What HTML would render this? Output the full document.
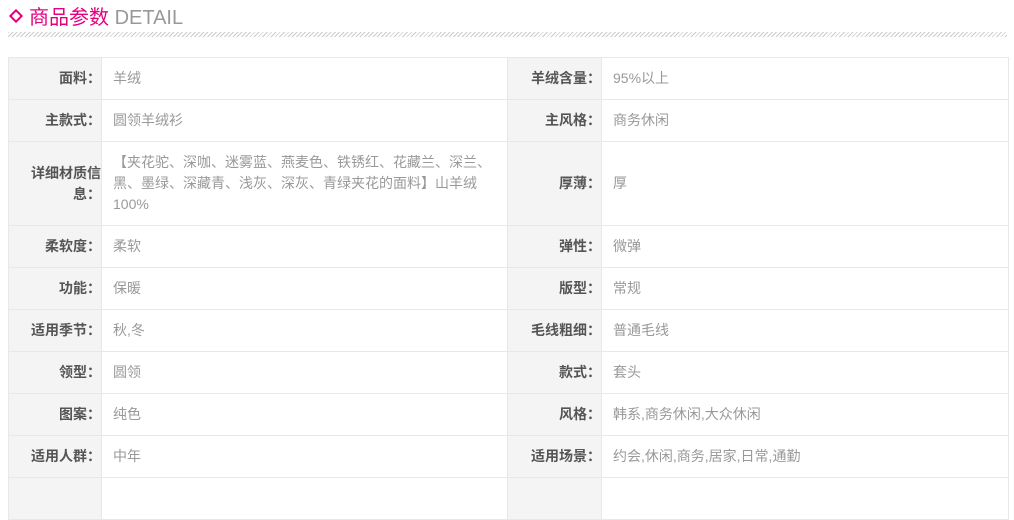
<!DOCTYPE html>
<html><head><meta charset="utf-8"><style>
body{margin:0;background:#fff;font-family:"Liberation Sans","Noto Sans CJK SC",sans-serif;width:1014px;height:482px;overflow:hidden;position:relative}
.title{position:absolute;left:8px;top:4px;height:28px;font-size:20px;line-height:28px}
.dia{display:inline-block;width:6px;height:6px;border:2px solid #e4007f;transform:rotate(45deg);margin:0 8px 0 3px;position:relative;top:-3px}
.cn{color:#e4007f}.en{color:#999}
.hatch{position:absolute;left:8px;top:32px;width:999px;height:5px;background:repeating-linear-gradient(135deg,#ccc 0 1px,#fff 1px 3px)}
table{position:absolute;left:8px;top:57px;border-collapse:collapse;width:1000px;table-layout:fixed;font-size:14px}
td{border:1px solid #e8e8e8;height:41px;padding:0;line-height:21px;vertical-align:middle}
td.l{background:#f4f4f4;color:#555;font-weight:bold;text-align:right;padding-right:0}
td.v{color:#999;padding-left:11px;padding-right:10px}
</style></head><body>
<div class="title"><span class="dia"></span><span class="cn">商品参数</span> <span class="en">DETAIL</span></div>
<div class="hatch"></div>
<table>
<colgroup><col style="width:93px"><col style="width:406px"><col style="width:94px"><col style="width:407px"></colgroup>
<tr><td class="l">面料：</td><td class="v">羊绒</td><td class="l">羊绒含量：</td><td class="v">95%以上</td></tr>
<tr><td class="l">主款式：</td><td class="v">圆领羊绒衫</td><td class="l">主风格：</td><td class="v">商务休闲</td></tr>
<tr><td class="l" style="height:83px">详细材质信息：</td><td class="v">【夹花驼、深咖、迷雾蓝、燕麦色、铁锈红、花藏兰、深兰、黑、墨绿、深藏青、浅灰、深灰、青绿夹花的面料】山羊绒100%</td><td class="l">厚薄：</td><td class="v">厚</td></tr>
<tr><td class="l">柔软度：</td><td class="v">柔软</td><td class="l">弹性：</td><td class="v">微弹</td></tr>
<tr><td class="l">功能：</td><td class="v">保暖</td><td class="l">版型：</td><td class="v">常规</td></tr>
<tr><td class="l">适用季节：</td><td class="v">秋,冬</td><td class="l">毛线粗细：</td><td class="v">普通毛线</td></tr>
<tr><td class="l">领型：</td><td class="v">圆领</td><td class="l">款式：</td><td class="v">套头</td></tr>
<tr><td class="l">图案：</td><td class="v">纯色</td><td class="l">风格：</td><td class="v">韩系,商务休闲,大众休闲</td></tr>
<tr><td class="l">适用人群：</td><td class="v">中年</td><td class="l">适用场景：</td><td class="v">约会,休闲,商务,居家,日常,通勤</td></tr>
<tr><td class="l"></td><td class="v"></td><td class="l"></td><td class="v"></td></tr>
</table>
</body></html>
